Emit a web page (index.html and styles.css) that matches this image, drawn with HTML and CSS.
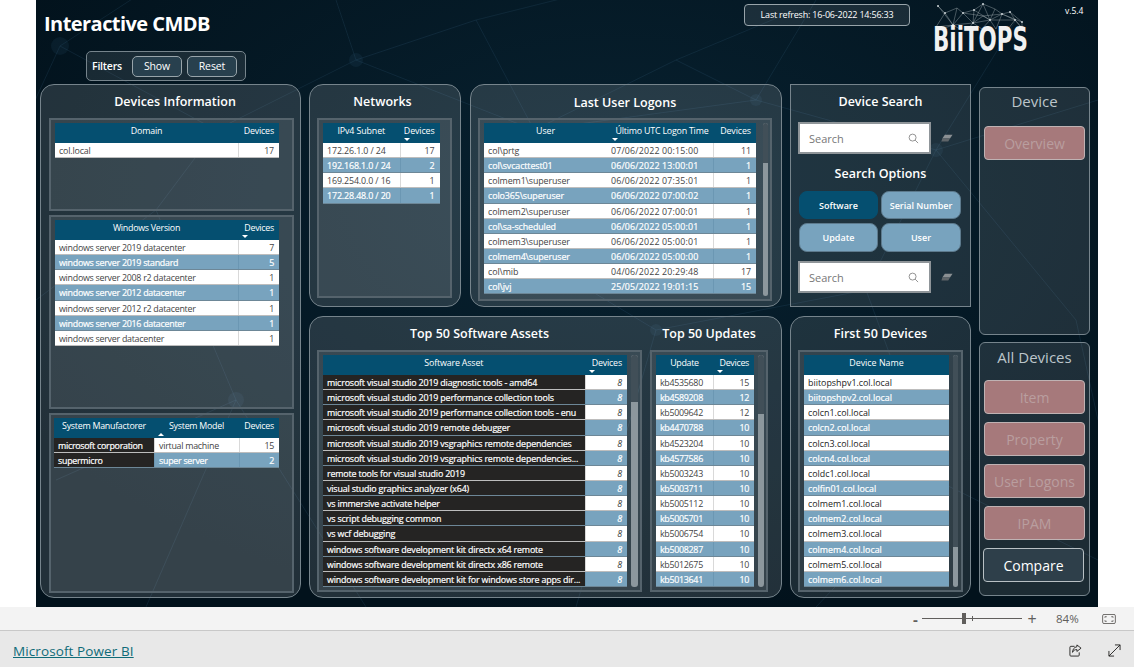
FILE: index.html
```html
<!DOCTYPE html>
<html lang="en">
<head>
<meta charset="utf-8">
<title>Interactive CMDB</title>
<link rel="stylesheet" href="styles.css">
</head>
<body>
<div class="stage">
  <main class="canvas">
    <svg class="backdrop" viewBox="0 0 1062 607" aria-hidden="true">
      <g class="bg-lines">
        <path d="M24 46 L180 130 L320 60 L440 20 L498 130 L640 60 L760 10"/>
        <path d="M24 46 L110 -10 M24 46 L-10 120 M180 130 L120 210 L0 300 M320 60 L300 0 M320 60 L498 130 L470 240"/>
        <path d="M440 20 L560 -10 M498 130 L720 100 L900 150 L1062 100 M640 60 L720 100 L780 0"/>
        <path d="M900 150 L980 20 M900 150 L1040 320 L1062 420 M120 210 L200 400 L110 607 M200 400 L20 480 M200 400 L330 607"/>
        <path d="M470 240 L620 330 L540 607 M620 330 L830 290 L900 150 M830 290 L900 480 L780 607 M900 480 L1062 560"/>
      </g>
      <g class="bg-nodes">
        <circle cx="24" cy="46" r="9"/><circle cx="320" cy="60" r="7"/><circle cx="498" cy="130" r="7"/>
        <circle cx="720" cy="100" r="6"/><circle cx="200" cy="400" r="8"/><circle cx="900" cy="150" r="7"/>
        <circle cx="620" cy="330" r="6"/><circle cx="900" cy="480" r="7"/>
      </g>
    </svg>

    <header class="topbar">
      <div class="topbar-left">
        <h1 class="report-title">Interactive CMDB</h1>
        <div class="filters">
          <span class="filters-label">Filters</span>
          <button class="pill">Show</button>
          <button class="pill">Reset</button>
        </div>
      </div>
      <div class="topbar-right">
        <div class="refresh">Last refresh: 16-06-2022 14:56:33</div>
        <div class="logo">
          <svg class="logo-art" viewBox="0 0 100 51" aria-hidden="true">
            <g class="logo-mesh">
              <path d="M8 3 L15 10 L27 5 L33 10 L44 7 L53 1 L65 6 L72 11 L80 9 L92 19 L92 25"/>
              <path d="M15 10 L6 24 L23 22 L43 20 L60 17 L85 17 L92 25 M8 3 L23 22 L33 10 L43 20 L53 1 L60 17 L72 11 L85 17 L80 9"/>
              <path d="M15 10 L23 22 M27 5 L23 22 M44 7 L43 20 M44 7 L60 17 M33 10 L53 13 L72 11 M65 6 L60 17 M53 13 L43 20 M53 13 L60 17 M72 11 L66 26 M60 17 L66 26 M43 20 L38 26 M60 17 L52 26 M43 20 L52 26 M23 22 L30 26 M23 22 L12 26 M85 17 L78 26 M85 17 L92 25 M72 11 L92 19"/>
            </g>
            <g class="logo-dots">
              <circle cx="8" cy="3" r="1"/><circle cx="15" cy="10" r="1"/><circle cx="33" cy="10" r="1"/>
              <circle cx="53" cy="1" r="1"/><circle cx="44" cy="7" r="1"/><circle cx="72" cy="11" r="1"/>
              <circle cx="80" cy="9" r="1"/><circle cx="92" cy="19" r="1"/><circle cx="85" cy="17" r="1"/>
              <circle cx="60" cy="17" r="1"/><circle cx="43" cy="20" r="1"/><circle cx="23" cy="22" r="1"/>
            </g>
          </svg>
          <span class="logo-text">BiiTOPS</span>
        </div>
        <div class="version">v.5.4</div>
      </div>
    </header>

    <div class="report">
      <section class="panel panel-devices">
        <h2 class="panel-title">Devices Information</h2>
        <div class="frame frame-domain">
          <div class="tbl tbl-domain">
            <div class="row head"><span class="th">Domain</span><span class="th th-end">Devices</span></div>
            <div class="row"><span>col.local</span><span class="num">17</span></div>
          </div>
        </div>
        <div class="frame frame-windows">
          <div class="tbl tbl-windows">
            <div class="row head"><span class="th">Windows Version</span><span class="th th-end sort-down">Devices</span></div>
            <div class="row"><span>windows server 2019 datacenter</span><span class="num">7</span></div>
            <div class="row alt"><span>windows server 2019 standard</span><span class="num">5</span></div>
            <div class="row"><span>windows server 2008 r2 datacenter</span><span class="num">1</span></div>
            <div class="row alt"><span>windows server 2012 datacenter</span><span class="num">1</span></div>
            <div class="row"><span>windows server 2012 r2 datacenter</span><span class="num">1</span></div>
            <div class="row alt"><span>windows server 2016 datacenter</span><span class="num">1</span></div>
            <div class="row"><span>windows server datacenter</span><span class="num">1</span></div>
          </div>
        </div>
        <div class="frame frame-system">
          <div class="tbl tbl-system">
            <div class="row head"><span class="th">System Manufactorer</span><span class="th sort-up">System Model</span><span class="th th-end">Devices</span></div>
            <div class="row"><span class="dark">microsoft corporation</span><span>virtual machine</span><span class="num">15</span></div>
            <div class="row alt"><span class="dark">supermicro</span><span>super server</span><span class="num">2</span></div>
          </div>
        </div>
      </section>

      <section class="panel panel-networks">
        <h2 class="panel-title">Networks</h2>
        <div class="frame frame-fill">
          <div class="tbl tbl-networks">
            <div class="row head"><span class="th">IPv4 Subnet</span><span class="th th-end sort-down">Devices</span></div>
            <div class="row"><span>172.26.1.0 / 24</span><span class="num">17</span></div>
            <div class="row alt"><span>192.168.1.0 / 24</span><span class="num">2</span></div>
            <div class="row"><span>169.254.0.0 / 16</span><span class="num">1</span></div>
            <div class="row alt"><span>172.28.48.0 / 20</span><span class="num">1</span></div>
          </div>
        </div>
      </section>

      <section class="panel panel-logons">
        <h2 class="panel-title">Last User Logons</h2>
        <div class="frame frame-fill">
          <div class="tbl tbl-logons">
            <div class="row head"><span class="th">User</span><span class="th sort-down">Último UTC Logon Time</span><span class="th th-end">Devices</span></div>
            <div class="row"><span>col\prtg</span><span>07/06/2022 00:15:00</span><span class="num">11</span></div>
            <div class="row alt"><span>col\svcacttest01</span><span>06/06/2022 13:00:01</span><span class="num">1</span></div>
            <div class="row"><span>colmem1\superuser</span><span>06/06/2022 07:35:01</span><span class="num">1</span></div>
            <div class="row alt"><span>colo365\superuser</span><span>06/06/2022 07:00:02</span><span class="num">1</span></div>
            <div class="row"><span>colmem2\superuser</span><span>06/06/2022 07:00:01</span><span class="num">1</span></div>
            <div class="row alt"><span>col\sa-scheduled</span><span>06/06/2022 05:00:01</span><span class="num">1</span></div>
            <div class="row"><span>colmem3\superuser</span><span>06/06/2022 05:00:01</span><span class="num">1</span></div>
            <div class="row alt"><span>colmem4\superuser</span><span>06/06/2022 05:00:00</span><span class="num">1</span></div>
            <div class="row"><span>col\mib</span><span>04/06/2022 20:29:48</span><span class="num">17</span></div>
            <div class="row alt"><span>col\jvj</span><span>25/05/2022 19:01:15</span><span class="num">15</span></div>
          </div>
          <div class="scroll scroll-logons"><div class="thumb"></div></div>
        </div>
      </section>

      <section class="panel panel-search">
        <h2 class="panel-title">Device Search</h2>
        <div class="search-line">
          <div class="searchbox">
            <span>Search</span>
            <svg class="mag" viewBox="0 0 12 12" aria-hidden="true"><circle cx="5" cy="5" r="3.8"/><path d="M7.8 7.8 L11 11"/></svg>
          </div>
          <svg class="eraser" viewBox="0 0 14 10" aria-hidden="true"><path class="eraser-top" d="M4.5 0.5 H13.5 L10.5 5 H1.5 Z"/><path class="eraser-low" d="M1.5 5 H10.5 L8.5 8.5 H0.5 Z"/></svg>
        </div>
        <h3 class="subtitle">Search Options</h3>
        <div class="options">
          <button class="opt opt-on">Software</button>
          <button class="opt">Serial Number</button>
          <button class="opt">Update</button>
          <button class="opt">User</button>
        </div>
        <div class="search-line">
          <div class="searchbox">
            <span>Search</span>
            <svg class="mag" viewBox="0 0 12 12" aria-hidden="true"><circle cx="5" cy="5" r="3.8"/><path d="M7.8 7.8 L11 11"/></svg>
          </div>
          <svg class="eraser" viewBox="0 0 14 10" aria-hidden="true"><path class="eraser-top" d="M4.5 0.5 H13.5 L10.5 5 H1.5 Z"/><path class="eraser-low" d="M1.5 5 H10.5 L8.5 8.5 H0.5 Z"/></svg>
        </div>
      </section>

      <aside class="nav-col">
        <nav class="navbox navbox-device">
          <div class="nav-title">Device</div>
          <button class="navbtn">Overview</button>
        </nav>
        <nav class="navbox navbox-all">
          <div class="nav-title">All Devices</div>
          <button class="navbtn">Item</button>
          <button class="navbtn">Property</button>
          <button class="navbtn">User Logons</button>
          <button class="navbtn">IPAM</button>
          <button class="navbtn navbtn-on">Compare</button>
        </nav>
      </aside>

      <section class="panel panel-top50">
        <div class="top-col top-software">
          <h2 class="panel-title">Top 50 Software Assets</h2>
          <div class="frame frame-list">
            <div class="tbl tbl-software">
              <div class="row head"><span class="th">Software Asset</span><span class="th th-end sort-down">Devices</span></div>
              <div class="row"><span class="dark">microsoft visual studio 2019 diagnostic tools - amd64</span><span class="num ital">8</span></div>
              <div class="row alt"><span class="dark">microsoft visual studio 2019 performance collection tools</span><span class="num ital">8</span></div>
              <div class="row"><span class="dark">microsoft visual studio 2019 performance collection tools - enu</span><span class="num ital">8</span></div>
              <div class="row alt"><span class="dark">microsoft visual studio 2019 remote debugger</span><span class="num ital">8</span></div>
              <div class="row"><span class="dark">microsoft visual studio 2019 vsgraphics remote dependencies</span><span class="num ital">8</span></div>
              <div class="row alt"><span class="dark">microsoft visual studio 2019 vsgraphics remote dependencies...</span><span class="num ital">8</span></div>
              <div class="row"><span class="dark">remote tools for visual studio 2019</span><span class="num ital">8</span></div>
              <div class="row alt"><span class="dark">visual studio graphics analyzer (x64)</span><span class="num ital">8</span></div>
              <div class="row"><span class="dark">vs immersive activate helper</span><span class="num ital">8</span></div>
              <div class="row alt"><span class="dark">vs script debugging common</span><span class="num ital">8</span></div>
              <div class="row"><span class="dark">vs wcf debugging</span><span class="num ital">8</span></div>
              <div class="row alt"><span class="dark">windows software development kit directx x64 remote</span><span class="num ital">8</span></div>
              <div class="row"><span class="dark">windows software development kit directx x86 remote</span><span class="num ital">8</span></div>
              <div class="row alt"><span class="dark">windows software development kit for windows store apps dir...</span><span class="num ital">8</span></div>
            </div>
            <div class="scroll scroll-software"><div class="thumb"></div></div>
          </div>
        </div>
        <div class="top-col top-updates">
          <h2 class="panel-title">Top 50 Updates</h2>
          <div class="frame frame-list">
            <div class="tbl tbl-updates">
              <div class="row head"><span class="th">Update</span><span class="th th-end sort-down">Devices</span></div>
              <div class="row"><span>kb4535680</span><span class="num">15</span></div>
              <div class="row alt"><span>kb4589208</span><span class="num">12</span></div>
              <div class="row"><span>kb5009642</span><span class="num">12</span></div>
              <div class="row alt"><span>kb4470788</span><span class="num">10</span></div>
              <div class="row"><span>kb4523204</span><span class="num">10</span></div>
              <div class="row alt"><span>kb4577586</span><span class="num">10</span></div>
              <div class="row"><span>kb5003243</span><span class="num">10</span></div>
              <div class="row alt"><span>kb5003711</span><span class="num">10</span></div>
              <div class="row"><span>kb5005112</span><span class="num">10</span></div>
              <div class="row alt"><span>kb5005701</span><span class="num">10</span></div>
              <div class="row"><span>kb5006754</span><span class="num">10</span></div>
              <div class="row alt"><span>kb5008287</span><span class="num">10</span></div>
              <div class="row"><span>kb5012675</span><span class="num">10</span></div>
              <div class="row alt"><span>kb5013641</span><span class="num">10</span></div>
            </div>
            <div class="scroll scroll-updates"><div class="thumb"></div></div>
          </div>
        </div>
      </section>

      <section class="panel panel-first50">
        <h2 class="panel-title">First 50 Devices</h2>
        <div class="frame frame-list">
          <div class="tbl tbl-first50">
            <div class="row head"><span class="th">Device Name</span></div>
            <div class="row"><span class="ink">biitopshpv1.col.local</span></div>
            <div class="row alt"><span>biitopshpv2.col.local</span></div>
            <div class="row"><span class="ink">colcn1.col.local</span></div>
            <div class="row alt"><span>colcn2.col.local</span></div>
            <div class="row"><span class="ink">colcn3.col.local</span></div>
            <div class="row alt"><span>colcn4.col.local</span></div>
            <div class="row"><span class="ink">coldc1.col.local</span></div>
            <div class="row alt"><span>colfin01.col.local</span></div>
            <div class="row"><span class="ink">colmem1.col.local</span></div>
            <div class="row alt"><span>colmem2.col.local</span></div>
            <div class="row"><span class="ink">colmem3.col.local</span></div>
            <div class="row alt"><span>colmem4.col.local</span></div>
            <div class="row"><span class="ink">colmem5.col.local</span></div>
            <div class="row alt"><span>colmem6.col.local</span></div>
          </div>
          <div class="scroll scroll-first50"><div class="thumb"></div></div>
        </div>
      </section>
    </div>
  </main>
</div>

<div class="statusbar">
  <button class="zoom-sign">-</button>
  <div class="slider"><span class="slider-mark"></span><span class="slider-thumb"></span></div>
  <button class="zoom-sign zoom-plus">+</button>
  <span class="zoom-value">84%</span>
  <svg class="fit" viewBox="0 0 15 11" aria-hidden="true"><rect x="0.5" y="0.5" width="14" height="10" rx="1.5"/><path d="M3 4 V3 H5 M10 3 H12 V4 M12 7 V8 H10 M5 8 H3 V7"/></svg>
</div>
<footer class="brandbar">
  <a class="brand" href="#">Microsoft Power BI</a>
  <div class="brand-icons">
    <svg class="share" viewBox="0 0 14 14" aria-hidden="true"><path d="M6 2.5 H2 A1 1 0 0 0 1 3.5 V12 A1 1 0 0 0 2 13 H10 A1 1 0 0 0 11 12 V9"/><path d="M8.5 1 L13 4.5 L8.5 8 V6 C6 6 4.5 7 3.8 9 C3.8 6 5.5 3.3 8.5 3 Z"/></svg>
    <svg class="expand" viewBox="0 0 14 14" aria-hidden="true"><path d="M1 13 L13 1 M7.5 1 H13 V6.5 M1 7.5 V13 H6.5"/></svg>
  </div>
</footer>
</body>
</html>
```

FILE: styles.css
```css
* { box-sizing: border-box; }

html, body { margin: 0; padding: 0; }

body {
  background: #fff;
  font-family: "Open Sans", "Noto Sans", "Liberation Sans", sans-serif;
  width: 1134px;
  height: 667px;
  overflow: hidden;
}

button { font-family: inherit; cursor: default; }

h1, h2, h3 { margin: 0; }

/* ---- canvas ---- */
.stage { height: 607px; padding-left: 36px; }

.canvas {
  position: relative;
  width: 1062px;
  height: 607px;
  overflow: hidden;
  background: radial-gradient(ellipse 700px 420px at 580px 200px, #082231 0%, #04192a00 100%), #02121c;
}

.backdrop { position: absolute; inset: 0; width: 100%; height: 100%; }
.bg-lines path { fill: none; stroke: #3b6c88; stroke-opacity: .18; stroke-width: 1; }
.bg-nodes circle { fill: #3b6c88; fill-opacity: .12; }

/* ---- top bar ---- */
.topbar {
  position: relative;
  height: 84px;
  display: flex;
  justify-content: space-between;
  padding: 0 16px 0 8px;
}

.topbar-left { display: flex; flex-direction: column; align-items: flex-start; }

.report-title {
  margin-top: 8px;
  height: 43px;
  font-size: 20px;
  line-height: 31px;
  font-weight: 700;
  letter-spacing: -.55px;
  color: #fff;
}

.filters {
  margin-left: 42px;
  width: 160px;
  height: 30px;
  display: flex;
  align-items: center;
  gap: 5px;
  padding-left: 5px;
  border: 1px solid #76848c;
  border-radius: 5px;
  background: rgba(255, 255, 255, .09);
}

.filters-label {
  width: 35px;
  font-size: 10.5px;
  font-weight: 600;
  letter-spacing: -.2px;
  color: #fff;
}

.pill {
  width: 50px;
  height: 21px;
  padding: 0;
  border: 1px solid #98a4aa;
  border-radius: 5px;
  background: #28404e;
  color: #fff;
  font-size: 10.5px;
  letter-spacing: -.1px;
}

.topbar-right { display: flex; align-items: flex-start; }

.refresh {
  margin-top: 4px;
  width: 166px;
  height: 22px;
  border: 1px solid #98a4aa;
  border-radius: 4px;
  background: rgba(255, 255, 255, .09);
  color: #fff;
  font-size: 9px;
  line-height: 20px;
  letter-spacing: -.2px;
  text-align: center;
}

/* the wordmark is a squeezed line of text laid over the mesh drawing */
.logo {
  position: relative;
  margin: 3px 0 0 20px;
  width: 100px;
  height: 51px;
}

.logo-art { display: block; width: 100px; height: 51px; }
.logo-mesh path { fill: none; stroke: #b4bcc1; stroke-opacity: .7; stroke-width: .55; }
.logo-dots circle { fill: #c9d0d4; }

.logo-text {
  position: absolute;
  left: 3px;
  top: 18px;
  font-family: "DejaVu Sans", "Liberation Sans", sans-serif;
  font-size: 34px;
  line-height: 36px;
  font-weight: 700;
  color: #f1f1f1;
  white-space: nowrap;
  transform: scaleX(.63);
  transform-origin: left top;
}

.version {
  margin: 5px 0 0 35px;
  width: 17px;
  font-size: 8.5px;
  line-height: 12px;
  color: #fff;
  white-space: nowrap;
}

/* ---- report grid ---- */
.report {
  position: relative;
  margin-left: 4px;
  display: grid;
  grid-template-columns: 261px 153px 312px 181px 111px;
  grid-template-rows: 223px 282px;
  column-gap: 8px;
  row-gap: 9px;
}

.panel {
  display: flex;
  flex-direction: column;
  border: 1px solid #76848c;
  border-radius: 14px;
  background: rgba(255, 255, 255, .13);
  min-width: 0;
}

.panel-title {
  height: 33px;
  flex: none;
  font-size: 12.5px;
  line-height: 33px;
  font-weight: 600;
  text-align: center;
  color: #fff;
}

.panel-devices .panel-title { padding-left: 7px; }
.panel-networks .panel-title { padding-right: 4px; }
.panel-logons .panel-title { line-height: 35px; }
.panel-top50 .panel-title, .panel-first50 .panel-title { line-height: 34px; }

.panel-devices { grid-column: 1; grid-row: 1 / span 2; height: 514px; padding: 0 6px 0 8px; }
.panel-networks { grid-column: 2; grid-row: 1; margin-right: 1px; padding: 0 8px 8px 7px; }
.panel-logons { grid-column: 3; grid-row: 1; padding: 0 9px 8px 7px; }
.panel-search { grid-column: 4; grid-row: 1; border-radius: 0; background: rgba(255, 255, 255, .1); align-items: stretch; }
.panel-top50 { grid-column: 2 / span 2; grid-row: 2; flex-direction: row; gap: 8px; padding: 0 13px 7px 7px; }
.panel-first50 { grid-column: 4; grid-row: 2; padding: 0 7px 7px 7px; background: rgba(255, 255, 255, .1); }

.top-col { display: flex; flex-direction: column; }
.top-software { width: 325px; }
.top-updates { width: 118px; }

/* ---- frames ---- */
.frame {
  display: flex;
  gap: 6px;
  padding: 3px 4px;
  border: 2px solid #55636c;
  background: rgba(255, 255, 255, .09);
}

.panel-devices .frame { flex: none; margin-bottom: 4px; }
.frame-domain { height: 93px; }
.frame-windows { height: 194px; }
.frame-system { height: 180px; }
.frame-fill, .frame-list { flex: 1; }

/* ---- tables ---- */
.tbl {
  flex: none;
  overflow: hidden;
  align-self: flex-start;
  font-size: 8.9px;
  line-height: 14px;
  letter-spacing: -.17px;
}

.tbl-domain { --cols: 183px 41px; width: 224px; }
.tbl-windows { --cols: 183px 41px; width: 224px; letter-spacing: -.27px; }
.tbl-system { --cols: 100px 85px 40px; width: 225px; margin-left: -1px; letter-spacing: -.27px; }
.tbl-networks { --cols: 76.5px 40px; width: 116.5px; letter-spacing: -.13px; }
.tbl-logons { --cols: 127px 102px 43px; width: 272px; letter-spacing: -.1px; }
.tbl-software { --cols: 261.5px 42.5px; width: 304px; height: 232px; }
.tbl-updates { --cols: 57px 41px; width: 98px; height: 232px; letter-spacing: -.3px; }
.tbl-first50 { --cols: 145px; width: 145px; height: 232px; letter-spacing: 0; }

.row {
  display: grid;
  grid-template-columns: var(--cols);
  height: 15.15px;
  background: #fff;
  color: #444;
  border-bottom: 1px solid #bdbdbd;
}

.row > span {
  display: block;
  height: 100%;
  padding: 1px 4px 0;
  white-space: nowrap;
  overflow: hidden;
}

.row > span + span { border-left: 1px solid #d9d9d9; }

.row.alt { background: #78a3be; color: #fff; border-bottom-color: #6d8797; -webkit-text-stroke: .2px #fff; }
.row.alt > span + span { border-left-color: #6b97b3; }

.row .num { padding-right: 5px; text-align: right; }
.row .ital { font-style: italic; }
.row .ink { color: #222; }

.row .dark, .row.alt .dark { background: #252423; color: #fff; -webkit-text-stroke: .2px #fff; }

/* the time column of the logons table runs on from the user column */
.tbl-logons .row > span:nth-child(2) {
  border-left: 0;
  padding-left: 0;
  letter-spacing: .15px;
}

.row.head {
  height: 20px;
  background: #054f70;
  color: #fff;
  border-bottom: 0;
}

.row.head > span, .row.head > span + span {
  border: 0;
  padding: 1px 4px 0;
  overflow: visible;
  text-align: center;
}

.row.head .th-end { text-align: right; padding-right: 5px; }

.tbl-logons .row.head > span:nth-child(1) { padding-right: 8px; }
.tbl-logons .row.head > span:nth-child(2) { padding: 1px 0 0; letter-spacing: -.22px; }

.sort-down, .sort-up { position: relative; }

.sort-down::after, .sort-up::after {
  content: "";
  position: absolute;
  left: 4px;
  bottom: 2px;
  border-left: 3px solid transparent;
  border-right: 3px solid transparent;
}

.sort-down::after { border-top: 3px solid #fff; }
.sort-up::after { border-bottom: 3px solid #fff; }
.tbl-logons .sort-down::after { left: 1px; }

/* ---- scroll bars ---- */
.scroll {
  flex: none;
  align-self: flex-start;
  background: #8c979d;
  border-radius: 3px;
  overflow: hidden;
}

.thumb { background: #414f58; height: 100%; }

.scroll-logons { width: 5px; height: 173px; margin-left: 1px; }
.scroll-logons .thumb { height: 40px; }
.scroll-software { width: 7px; height: 232px; margin-left: -2px; }
.scroll-software .thumb { height: 47px; }
.scroll-updates { width: 6px; height: 232px; margin-left: -2px; }
.scroll-updates .thumb { height: 59px; }
.scroll-first50 { width: 5px; height: 232px; margin-left: -2px; }
.scroll-first50 .thumb { height: 192px; }

/* ---- search panel ---- */
.panel-search .panel-title { height: 32px; line-height: 33px; }

.search-line {
  display: flex;
  align-items: center;
  margin: 5px 0 0 7px;
  gap: 10px;
}

.searchbox {
  width: 133px;
  height: 32px;
  display: flex;
  justify-content: space-between;
  align-items: center;
  padding: 1px 10px 0 9px;
  border: 2px solid #8f9599;
  background: #fff;
  color: #777;
  font-size: 11px;
}

.mag { width: 11px; height: 11px; }
.mag circle, .mag path { fill: none; stroke: #8a8a8a; stroke-width: 1; }

.eraser { width: 12px; height: 9px; }
.eraser-top { fill: #8b9093; }
.eraser-low { fill: #5f6569; }

.subtitle {
  margin-top: 10px;
  height: 27px;
  font-size: 12.5px;
  line-height: 20px;
  font-weight: 600;
  text-align: center;
  color: #fff;
}

.options {
  margin: 0 0 0 8px;
  display: grid;
  grid-template-columns: 79px 80px;
  grid-template-rows: 28px 29px;
  gap: 4px 3px;
}

.opt {
  padding: 0;
  border: 1px solid #5d7a8d;
  border-radius: 8px;
  background: #78a3be;
  color: #fff;
  font-size: 9px;
  font-weight: 600;
}

.opt-on { background: #054f70; border-color: #054f70; }

.options + .search-line { margin-top: 9px; }
.options + .search-line .searchbox { height: 32px; }

/* ---- right nav ---- */
.nav-col {
  grid-column: 5;
  grid-row: 1 / span 2;
  display: flex;
  flex-direction: column;
  gap: 7px;
  padding-top: 3px;
}

.navbox {
  display: flex;
  flex-direction: column;
  align-items: flex-start;
  padding: 0 4px;
  border: 1px solid #76848c;
  border-radius: 6px;
  background: rgba(255, 255, 255, .11);
}

.navbox-device { height: 248px; }
.navbox-all { height: 254px; }

.nav-title {
  width: 100%;
  height: 38px;
  font-size: 15px;
  line-height: 27px;
  text-align: center;
  color: #bcc5ca;
}

.navbox-all .nav-title { height: 37px; line-height: 28px; }

.navbtn {
  width: 101px;
  height: 34px;
  padding: 0;
  margin-bottom: 8px;
  border: 1px solid #bfb2b3;
  border-radius: 4px;
  background: #a6797b;
  color: #b99e9f;
  font-size: 14px;
}

.navbtn-on {
  margin-left: -1px;
  border-color: #b8c0c4;
  background: #2e3f4a;
  color: #fff;
}

/* ---- footer ---- */
.statusbar {
  height: 24px;
  position: relative;
  display: flex;
  align-items: center;
  background: #f3f3f3;
  border-bottom: 1px solid #c8c8c8;
  padding-left: 912px;
  color: #605e5c;
}

.zoom-sign {
  padding: 0;
  width: 7px;
  border: 0;
  background: none;
  color: #605e5c;
  font-size: 15px;
  font-weight: 700;
  line-height: 14px;
}

.zoom-plus { width: 10px; margin-left: 5px; font-weight: 400; font-size: 16px; }

.slider {
  position: relative;
  margin-left: 3px;
  width: 100px;
  height: 1px;
  background: #605e5c;
}

.slider-thumb {
  position: absolute;
  left: 40px;
  top: -5px;
  width: 4px;
  height: 11px;
  background: #605e5c;
}

.slider-mark {
  position: absolute;
  left: 50px;
  top: -2px;
  width: 1px;
  height: 5px;
  background: #605e5c;
}

.zoom-value { margin-left: 19px; font-size: 11.5px; }

.fit { margin-left: 23px; width: 14px; height: 10px; }
.fit rect, .fit path { fill: none; stroke: #605e5c; stroke-width: 1; }

.brandbar {
  height: 36px;
  display: flex;
  justify-content: space-between;
  align-items: center;
  padding: 3px 13px 0;
  background: #e8e8e8;
}

.brand {
  color: #0f6b78;
  font-size: 13.5px;
  letter-spacing: .1px;
}

.brand-icons { display: flex; align-items: center; gap: 26px; margin-top: -1px; }

.share, .expand { width: 13px; height: 13px; }
.share path, .expand path { fill: none; stroke: #252423; stroke-width: 1; }
```
